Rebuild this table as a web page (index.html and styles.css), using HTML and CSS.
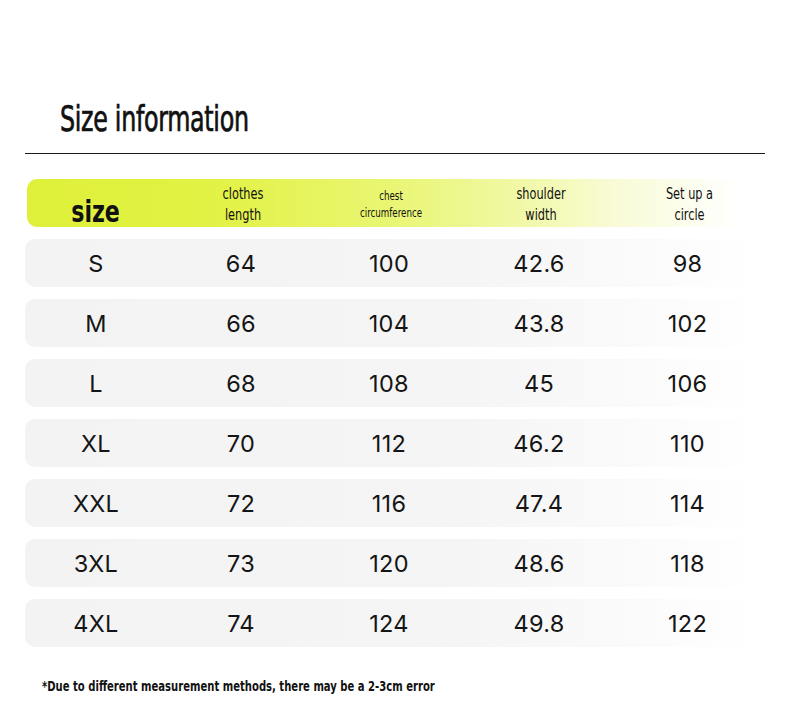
FILE: index.html
```html
<!DOCTYPE html>
<html>
<head>
<meta charset="utf-8">
<link rel="stylesheet" href="styles.css">
</head>
<body>
<div class="page">
  <h1 class="title">Size information</h1>
  <div class="rule"></div>
  <div class="table">
    <div class="row head">
      <div class="cell c-size">size</div>
      <div class="cell c-h">clothes<br>length</div>
      <div class="cell c-h small">chest<br>circumference</div>
      <div class="cell c-h">shoulder<br>width</div>
      <div class="cell c-h">Set up a<br>circle</div>
    </div>
    <div class="row"><div class="cell">S</div><div class="cell">64</div><div class="cell">100</div><div class="cell">42.6</div><div class="cell">98</div></div>
    <div class="row"><div class="cell">M</div><div class="cell">66</div><div class="cell">104</div><div class="cell">43.8</div><div class="cell">102</div></div>
    <div class="row"><div class="cell">L</div><div class="cell">68</div><div class="cell">108</div><div class="cell">45</div><div class="cell">106</div></div>
    <div class="row"><div class="cell">XL</div><div class="cell">70</div><div class="cell">112</div><div class="cell">46.2</div><div class="cell">110</div></div>
    <div class="row"><div class="cell">XXL</div><div class="cell">72</div><div class="cell">116</div><div class="cell">47.4</div><div class="cell">114</div></div>
    <div class="row"><div class="cell">3XL</div><div class="cell">73</div><div class="cell">120</div><div class="cell">48.6</div><div class="cell">118</div></div>
    <div class="row"><div class="cell">4XL</div><div class="cell">74</div><div class="cell">124</div><div class="cell">49.8</div><div class="cell">122</div></div>
  </div>
  <p class="note">*Due to different measurement methods, there may be a 2-3cm error</p>
</div>
</body>
</html>
```
FILE: styles.css
```css
html, body {
  margin: 0;
  padding: 0;
  background: #ffffff;
}
.page {
  width: 790px;
  height: 701px;
  padding-top: 99px;
  box-sizing: border-box;
  font-family: "DejaVu Sans Condensed", "DejaVu Sans", sans-serif;
  color: #111;
}
.title {
  margin: 0 0 0 60px;
  font-family: "DejaVu Sans Condensed", "DejaVu Sans", sans-serif;
  font-weight: normal;
  font-size: 35px;
  line-height: 40px;
  letter-spacing: -0.4px;
  -webkit-text-stroke: 0.7px #111;
  transform: scaleX(0.755);
  transform-origin: left center;
  color: #111;
}
.rule {
  margin: 14px 25px 0 25px;
  height: 1px;
  background: #1a1a1a;
}
.table {
  margin: 25px 0 0 25px;
  width: 735px;
  display: flex;
  flex-direction: column;
  gap: 12px;
}
.row {
  height: 48px;
  border-radius: 10px;
  display: grid;
  grid-template-columns: 142px 148px 148px 152px 145px;
  align-items: center;
  background: linear-gradient(90deg, #f3f3f3 0%, #f5f5f5 60%, #fbfbfb 85%, #ffffff 100%);
  font-family: "Inter", "Liberation Sans", Arial, sans-serif;
  font-size: 23.5px;
  letter-spacing: 0.3px;
  color: #151515;
}
.row.head {
  background: linear-gradient(90deg, #dff03a 0%, #e2f244 25%, #e9f674 50%, #eff89c 64%, #f8fbd4 80%, #ffffff 97%);
  margin-left: 2px;
  color: #1a1a1a;
}
.cell {
  text-align: center;
}
.head .cell {
  font-family: "DejaVu Sans Condensed", "DejaVu Sans", sans-serif;
  font-size: 15px;
  line-height: 21px;
  padding-top: 4px;
  letter-spacing: 0;
  transform: scaleX(0.84);
  color: #111;
}
.head .c-size {
  font-size: 30px;
  line-height: 30px;
  font-weight: bold;
  padding-top: 18px;
  padding-right: 6px;
  transform: scaleX(0.82);
}
.head .small {
  font-size: 11.5px;
  line-height: 17px;
}
.note {
  margin: 31px 0 0 42px;
  font-family: "DejaVu Sans Condensed", "DejaVu Sans", sans-serif;
  font-weight: bold;
  font-size: 14.5px;
  transform: scaleX(0.77);
  transform-origin: left center;
  color: #111;
}
```
